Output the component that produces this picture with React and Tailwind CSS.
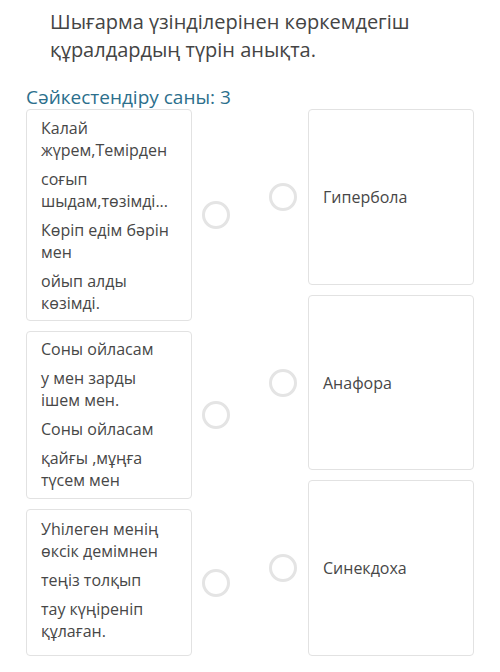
import React from "react";

const leftItems = [
  {
    id: 1,
    pad: "pt-[7px] pb-[6px]",
    paras: [
      ["Калай", "жүрем,Темірден"],
      ["соғып", "шыдам,төзімді..."],
      ["Көріп едім бәрін", "мен"],
      ["ойып алды", "көзімді."],
    ],
  },
  {
    id: 2,
    pad: "pt-[6px] pb-[7px]",
    paras: [
      ["Соны ойласам"],
      ["у мен зарды", "ішем мен."],
      ["Соны ойласам"],
      ["қайғы ,мұңға", "түсем мен"],
    ],
  },
  {
    id: 3,
    pad: "pt-[8px] pb-[13px]",
    paras: [
      ["Уһілеген менің", "өксік демімнен"],
      ["теңіз толқып"],
      ["тау күңіреніп", "құлаған."],
    ],
  },
];

const rightItems = ["Гипербола", "Анафора", "Синекдоха"];

const Circle = () => (
  <div className="w-[28px] h-[28px] shrink-0 rounded-full border-[3px] border-[#e4e4e4] bg-white" />
);

const App = () => {
  return (
    <div
      className="w-[500px] h-[672px] bg-white text-[#474747] overflow-hidden"
      style={{ fontFamily: '"Open Sans", "Noto Sans", sans-serif' }}
    >
      <h1 className="pl-[50px] pt-[8px] text-[20px] leading-[28px] text-[#444]">
        Шығарма үзінділерінен көркемдегіш
        <br />
        құралдардың түрін анықта.
      </h1>

      <div className="pl-[26px] mt-[21px] text-[19px] leading-[24px] text-[#2c6f8c]">
        Сәйкестендіру саны: 3
      </div>

      <div className="grid grid-cols-[204px_205px] gap-x-[39px] pl-[26px]">
        {/* left column */}
        <div className="flex flex-col gap-[10px]">
          {leftItems.map((item) => (
            <div key={item.id} className="flex items-center gap-[10px]">
              <div
                className={`w-[166px] shrink-0 rounded-[4px] border border-[#e2e2e2] px-[14px] ${item.pad} text-[16px] leading-[22px] flex flex-col gap-[7px]`}
              >
                {item.paras.map((lines, i) => (
                  <p key={i}>
                    {lines.map((l, j) => (
                      <React.Fragment key={j}>
                        {j > 0 && <br />}
                        {l}
                      </React.Fragment>
                    ))}
                  </p>
                ))}
              </div>
              <Circle />
            </div>
          ))}
        </div>

        {/* right column */}
        <div className="flex flex-col gap-[10px]">
          {rightItems.map((label) => (
            <div key={label} className="flex-1 flex items-center gap-[11px]">
              <Circle />
              <div className="w-[166px] self-stretch rounded-[4px] border border-[#e2e2e2] px-[14px] flex items-center text-[16px] leading-[22px]">
                {label}
              </div>
            </div>
          ))}
        </div>
      </div>
    </div>
  );
};

export default App;
